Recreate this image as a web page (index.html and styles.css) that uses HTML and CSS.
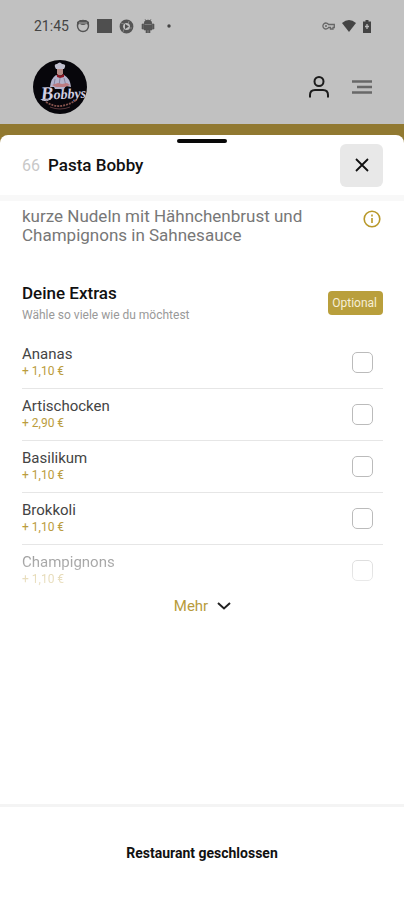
FILE: index.html
```html
<!DOCTYPE html>
<html lang="de">
<head>
<meta charset="utf-8">
<meta name="viewport" content="width=device-width, initial-scale=1">
<title>Pasta Bobby</title>
<link rel="stylesheet" href="styles.css">
</head>
<body>
<div class="status">
  <span class="clock">21:45</span>
  <svg width="14" height="14" viewBox="0 0 14 14"><circle cx="7" cy="7" r="5.5" fill="none" stroke="#555" stroke-width="1.4"/><path d="M1 6V3l3-2h6l3 2v3q-2-1-3-1-1 1-3 1T4 5Q3 5 1 6z" fill="#555"/><path d="M3 4h8" stroke="#aaa" stroke-width="1"/></svg>
  <svg width="15" height="14" viewBox="0 0 15 14"><path d="M0 0h15v14H0z" fill="#4f4f4f"/></svg>
  <svg width="15" height="15" viewBox="0 0 15 15"><circle cx="7.500" cy="7.500" r="5.200" fill="none" stroke="#555" stroke-width="3.400"/><path d="M6 5l4 2.500L6 10z" fill="#505050"/><path d="M2 4l3 1M10 2l-1 3M13 9l-3 0M4 13l1-3" stroke="#999" stroke-width=".7"/></svg>
  <svg width="14" height="14" viewBox="0 0 14 14"><path d="M3 5a4 4 0 0 1 8 0v6H9v3H7.500v-3h-1v3H5v-3H3zM1 5h1.500v5H1zM11.500 5H13v5h-1.500zM4 0l1 2M10 0L9 2" fill="#555" stroke="#555" stroke-width=".6"/><path d="M3.500 5.500h7" stroke="#999" stroke-width=".6"/></svg>
  <svg class="more" width="4" height="4" viewBox="0 0 4 4"><circle cx="2" cy="2" r="1.700" fill="#444"/></svg>
  <span class="spacer"></span>
  <svg width="13" height="10" viewBox="0 0 13 10"><path d="M6.500 3.500A3 3 0 1 0 6.500 6.500H8.500V8H11V6.500h1.300v-3z" fill="none" stroke="#666" stroke-width="1.300"/><circle cx="4" cy="5" r="1" fill="#666"/></svg>
  <svg width="14" height="12" viewBox="0 0 14 12"><path d="M0 3Q7-3 14 3L7 12z" fill="#444"/></svg>
  <svg class="battery" width="8" height="13" viewBox="0 0 8 13"><path d="M2.500 0h3v1.500H8V13H0V1.500h2.500z" fill="#444"/><path d="M4 4v5M2 6.500h4" stroke="#bbb" stroke-width="1.300"/></svg>
</div>
<header class="topbar">
  <a class="logo" href="#" aria-label="Bobbys">
    <svg width="54" height="54" viewBox="0 0 54 54">
      <circle cx="27" cy="27" r="27" fill="#07060b"/>
      <path d="M17 27q1-9 6-12l4 2 4-2q6 3 7 12l-5-1-2 3H22l-1-2z" fill="#b4b3cc"/>
      <path d="M27 18l-1 8M31 18l2 8M22 19l-1 6" stroke="#77738f" stroke-width=".8"/>
      <path d="M24 8h6v6q-3 3-6 0z" fill="#b58c88"/>
      <path d="M22 7q-1-3 2-3 3-3 5 0 4 0 3 3l-1 2h-8z" fill="#c0bfce"/>
      <path d="M24 14l3 2 4-2v3l-4 1-3-1z" fill="#8e1725"/>
      <path d="M19 25l6-2 4 1 5-1 3 2-5 2H23z" fill="#bd7b80"/>
      <text class="script" x="8" y="40" transform="rotate(-3 8 40)"><tspan class="initial">B</tspan>obbys</text>
      <path d="M9 40q4 2 9-1" fill="none" stroke="#c9c6dc" stroke-width="1"/>
      <path d="M13 42q14 9 30-2" fill="none" stroke="#87544e" stroke-width="1.800" stroke-dasharray="2 1"/>
      <path d="M17 47q10 4 20 0" fill="none" stroke="#59383b" stroke-width="1"/>
    </svg>
  </a>
  <button class="icon" type="button" aria-label="Konto">
    <svg width="20" height="22" viewBox="0 0 20 22" fill="none" stroke="#1c1c1c" stroke-width="2"><circle cx="10" cy="5.500" r="4.500"/><path d="M1 21.500V19q0-5 5-5h8q5 0 5 5v2.500"/></svg>
  </button>
  <button class="icon" type="button" aria-label="Menü">
    <svg width="20" height="14" viewBox="0 0 20 14" stroke="#686868" stroke-width="2.400"><path d="M0 1.500h20M5 7h15M0 12.500h20"/></svg>
  </button>
</header>
<main class="backdrop">
  <section class="sheet" role="dialog" aria-labelledby="title">
    <div class="grip"></div>
    <div class="sheet-head">
      <span class="number">66</span>
      <h1 id="title">Pasta Bobby</h1>
      <button class="close" type="button" aria-label="Schließen">
        <svg width="14" height="14" viewBox="0 0 14 14" stroke="#111" stroke-width="1.800"><path d="M1 1l12 12M13 1L1 13"/></svg>
      </button>
    </div>
    <div class="content">
      <div class="intro">
        <p>kurze Nudeln mit Hähnchenbrust und Champignons in Sahnesauce</p>
        <button class="icon" type="button" aria-label="Informationen">
          <svg width="18" height="18" viewBox="0 0 18 18" fill="none" stroke="#b89829" stroke-width="1.600"><circle cx="9" cy="9" r="7.800"/><path d="M9 8v5M9 4.500v2"/></svg>
        </button>
      </div>
      <div class="group-head">
        <div>
          <h2>Deine Extras</h2>
          <p>Wähle so viele wie du möchtest</p>
        </div>
        <span class="tag">Optional</span>
      </div>
      <div class="extras">
        <label class="extra"><span>Ananas<small>+ 1,10 €</small></span><input type="checkbox"></label>
        <label class="extra"><span>Artischocken<small>+ 2,90 €</small></span><input type="checkbox"></label>
        <label class="extra"><span>Basilikum<small>+ 1,10 €</small></span><input type="checkbox"></label>
        <label class="extra"><span>Brokkoli<small>+ 1,10 €</small></span><input type="checkbox"></label>
        <label class="extra faded"><span>Champignons<small>+ 1,10 €</small></span><input type="checkbox"></label>
      </div>
      <button class="expand" type="button">Mehr
        <svg width="14" height="8" viewBox="0 0 14 8" fill="none" stroke="#222" stroke-width="2"><path d="M1 1l6 5.500L13 1"/></svg>
      </button>
    </div>
    <footer class="closed">Restaurant geschlossen</footer>
  </section>
</main>
</body>
</html>
```
FILE: styles.css
```css
* { box-sizing: border-box; }
body {
  margin: 0;
  min-height: 100vh;
  display: flex;
  flex-direction: column;
  background: #c1c1c1;
  color: #111;
  font-family: Roboto, sans-serif;
}
h1, h2, p { margin: 0; }
svg { display: block; flex: none; }
button {
  border: 0;
  padding: 0;
  background: none;
  font: inherit;
}
.status {
  display: flex;
  align-items: center;
  gap: 7px;
  height: 52px;
  padding: 0 33px 0 34px;
}
.clock { font-size: 14px; color: #444; }
.more { margin-left: 5px; }
.spacer { flex: 1; }
.topbar {
  display: flex;
  align-items: center;
  gap: 23px;
  height: 72px;
  padding: 0 32px 2px 33px;
}
.logo { margin-right: auto; }
.script {
  font: italic bold 14px "Liberation Serif", serif;
  fill: #d0cee2;
}
.initial { font-size: 19px; }
.backdrop {
  flex: 1;
  display: flex;
  padding-top: 11px;
  background: #917931;
}
.sheet {
  flex: 1;
  display: flex;
  flex-direction: column;
  border-radius: 8px 8px 0 0;
  background: #fff;
}
.grip {
  align-self: center;
  width: 50px;
  height: 4px;
  margin-top: 4px;
  border-radius: 2px;
  background: #080808;
}
.sheet-head {
  display: flex;
  align-items: center;
  gap: 8px;
  height: 58px;
  padding: 0 21px 8px 22px;
  border-bottom: 6px solid #f8f8f8;
}
.number { font-size: 16px; color: #c8c8c8; }
h1 { font-size: 17px; font-weight: 500; }
.close {
  display: grid;
  place-items: center;
  width: 43px;
  height: 43px;
  margin-left: auto;
  border-radius: 6px;
  background: #e8e8e8;
}
.content {
  flex: 1;
  padding: 6px 21px 24px 22px;
}
.intro {
  display: flex;
  align-items: flex-start;
  justify-content: space-between;
  gap: 20px;
  padding: 0 2px 0 0;
  font-size: 17px;
  line-height: 19px;
  color: #777;
}
.intro p { max-width: 300px; }
.intro .icon { padding-top: 3px; }
.group-head {
  display: flex;
  align-items: center;
  justify-content: space-between;
  padding: 36px 0 12px;
}
h2 { font-size: 17px; line-height: 24px; font-weight: 500; }
.group-head p {
  font-size: 12px;
  line-height: 20px;
  color: #999;
}
.tag {
  padding: 0 6px 0 4px;
  border-radius: 4px;
  background: #b99f3c;
  color: #f6eed6;
  font-size: 12px;
  line-height: 24px;
}
.extra {
  display: flex;
  align-items: center;
  justify-content: space-between;
  height: 52px;
  padding-right: 10px;
  border-bottom: 1px solid #e6e6e6;
  font-size: 15px;
  line-height: 18px;
  color: #444;
}
.extra small {
  display: block;
  font-size: 12px;
  line-height: 17px;
  color: #bb9c3d;
}
.extra input {
  appearance: none;
  width: 21px;
  height: 21px;
  margin: 0;
  border: 1px solid #bbb;
  border-radius: 5px;
  background: #fff;
}
.extra.faded {
  border-color: transparent;
  -webkit-mask-image: linear-gradient(#0009, #0003);
  mask-image: linear-gradient(#0009, #0003);
}
.expand {
  display: flex;
  align-items: center;
  gap: 9px;
  margin: 0 auto;
  font-size: 15px;
  line-height: 18px;
  color: #b89b3b;
}
.closed {
  display: grid;
  place-items: center;
  height: 96px;
  padding-bottom: 2px;
  border-top: 3px solid #f4f4f4;
  font-size: 14px;
  font-weight: 700;
}
```
